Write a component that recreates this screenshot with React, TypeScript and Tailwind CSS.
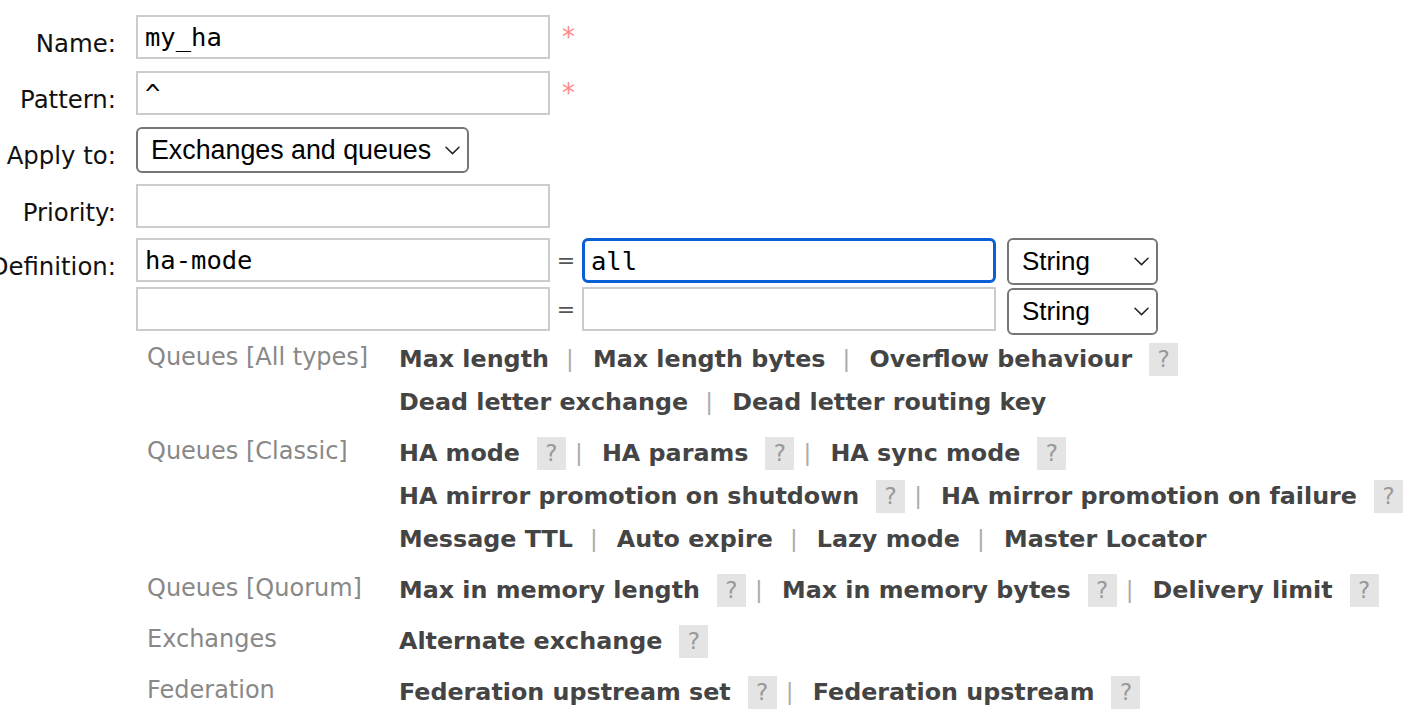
import React from 'react';

interface Arg {
  label: string;
  help?: boolean;
}

interface Group {
  title: string;
  lines: Arg[][];
}

const groups: Group[] = [
  {
    title: 'Queues [All types]',
    lines: [
      [{ label: 'Max length' }, { label: 'Max length bytes' }, { label: 'Overflow behaviour', help: true }],
      [{ label: 'Dead letter exchange' }, { label: 'Dead letter routing key' }],
    ],
  },
  {
    title: 'Queues [Classic]',
    lines: [
      [
        { label: 'HA mode', help: true },
        { label: 'HA params', help: true },
        { label: 'HA sync mode', help: true },
      ],
      [
        { label: 'HA mirror promotion on shutdown', help: true },
        { label: 'HA mirror promotion on failure', help: true },
      ],
      [{ label: 'Message TTL' }, { label: 'Auto expire' }, { label: 'Lazy mode' }, { label: 'Master Locator' }],
    ],
  },
  {
    title: 'Queues [Quorum]',
    lines: [
      [
        { label: 'Max in memory length', help: true },
        { label: 'Max in memory bytes', help: true },
        { label: 'Delivery limit', help: true },
      ],
    ],
  },
  {
    title: 'Exchanges',
    lines: [[{ label: 'Alternate exchange', help: true }]],
  },
  {
    title: 'Federation',
    lines: [[{ label: 'Federation upstream set', help: true }, { label: 'Federation upstream', help: true }]],
  },
];

function Chevron() {
  return (
    <svg width="15" height="9" viewBox="0 0 15 9" fill="none">
      <path d="M1 1.2 L7.5 7.6 L14 1.2" stroke="#222" strokeWidth="1.5" strokeLinecap="round" strokeLinejoin="round" />
    </svg>
  );
}

function Label({ children }: { children: React.ReactNode }) {
  return (
    <div className="flex w-[116px] shrink-0 justify-end whitespace-nowrap pt-[15px] text-[24.4px] leading-[28px] text-[#111]">
      {children}
    </div>
  );
}

function TextBox({ value, focused }: { value?: string; focused?: boolean }) {
  return (
    <div
      className={
        focused
          ? 'flex h-[45px] w-[414px] shrink-0 items-center rounded-[6px] border-[3px] border-[#0a5fd6] pl-[6px] pt-[1px] font-["DejaVu_Sans_Mono",monospace] text-[25.5px] text-black'
          : 'flex h-[44px] w-[414px] shrink-0 items-center border-2 border-[#cccccc] pl-[7px] pt-[1px] font-["DejaVu_Sans_Mono",monospace] text-[25.5px] text-black'
      }
    >
      {value}
    </div>
  );
}

function SelectBox({ value, className }: { value: string; className: string }) {
  return (
    <div
      className={`flex shrink-0 items-center justify-between rounded-[6px] border-2 border-[#767676] bg-white pl-[13px] pr-[7px] font-['Liberation_Sans',Arial,sans-serif] text-black ${className}`}
    >
      <span>{value}</span>
      <Chevron />
    </div>
  );
}

export default function App() {
  return (
    <div className="h-[728px] w-[1424px] overflow-hidden bg-white font-['DejaVu_Sans',Verdana,sans-serif]">
      {/* Policy form */}
      <div className="pt-[15px]">
        <div className="flex items-start">
          <Label>Name:</Label>
          <div className="ml-[20px]">
            <TextBox value="my_ha" />
          </div>
          <span className="ml-[12px] mt-[8px] text-[26px] leading-[28px] text-[#ff8888]">*</span>
        </div>

        <div className="mt-[12px] flex items-start">
          <Label>Pattern:</Label>
          <div className="ml-[20px]">
            <TextBox value="^" />
          </div>
          <span className="ml-[12px] mt-[8px] text-[26px] leading-[28px] text-[#ff8888]">*</span>
        </div>

        <div className="mt-[12px] flex items-start">
          <Label>Apply to:</Label>
          <div className="ml-[20px]">
            <SelectBox value="Exchanges and queues" className="h-[46px] w-[333px] text-[26.8px]" />
          </div>
        </div>

        <div className="mt-[11px] flex items-start">
          <Label>Priority:</Label>
          <div className="ml-[20px]">
            <TextBox />
          </div>
        </div>

        <div className="mt-[10px] flex items-start">
          <Label>Definition:</Label>
          <div className="ml-[20px] flex flex-col">
            <div className="flex items-start">
              <TextBox value="ha-mode" />
              <span className="mt-[9px] w-[32px] text-center text-[22px] leading-[28px] text-[#555]">=</span>
              <TextBox value="all" focused />
              <div className="ml-[11px]">
                <SelectBox value="String" className="h-[47px] w-[151px] text-[26px]" />
              </div>
            </div>
            <div className="mt-[2px] flex items-start">
              <TextBox />
              <span className="mt-[9px] w-[32px] text-center text-[22px] leading-[28px] text-[#555]">=</span>
              <TextBox />
              <div className="ml-[11px] mt-[1px]">
                <SelectBox value="String" className="h-[47px] w-[151px] text-[26px]" />
              </div>
            </div>
          </div>
        </div>
      </div>

      {/* Argument shortcuts */}
      <div className="mt-[3px] pl-[147px]">
        {groups.map(group => (
          <div key={group.title} className="mb-[8px] flex items-start">
            <div className="flex h-[43px] w-[252px] shrink-0 items-center whitespace-nowrap pb-[6px] text-[24px] text-[#888]">
              {group.title}
            </div>
            <div className="flex flex-col">
              {group.lines.map((line, li) => (
                <div key={li} className="flex h-[43px] items-center whitespace-nowrap text-[23.8px]">
                  {line.map((arg, i) => (
                    <React.Fragment key={arg.label}>
                      {i > 0 && (
                        <span
                          className={
                            line[i - 1].help
                              ? 'ml-[8px] mr-[18px] w-[10px] text-center text-[23px] text-[#aaa]'
                              : 'ml-[16px] mr-[18px] w-[10px] text-center text-[23px] text-[#aaa]'
                          }
                        >
                          |
                        </span>
                      )}
                      <span className="font-bold text-[#444]">{arg.label}</span>
                      {arg.help && (
                        <span className="ml-[17px] flex h-[33px] w-[29px] items-center justify-center bg-[#e4e4e4] text-[23px] text-[#999]">
                          ?
                        </span>
                      )}
                    </React.Fragment>
                  ))}
                </div>
              ))}
            </div>
          </div>
        ))}
      </div>
    </div>
  );
}
